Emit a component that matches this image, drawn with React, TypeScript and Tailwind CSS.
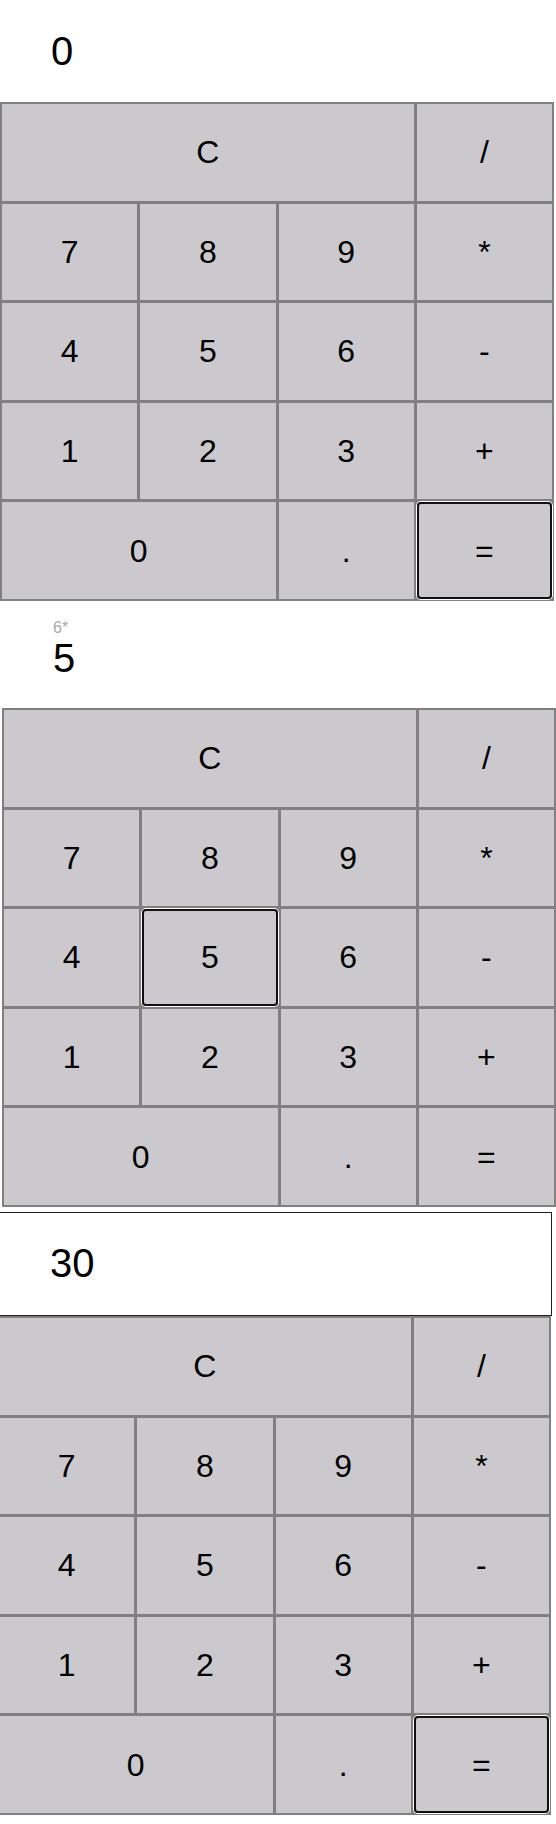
import React from "react";

type Key = { label: string; span?: string };

// Same keypad in every snapshot, read row by row.
const keys: Key[] = [
  { label: "C", span: "col-span-3" },
  { label: "/" },
  { label: "7" },
  { label: "8" },
  { label: "9" },
  { label: "*" },
  { label: "4" },
  { label: "5" },
  { label: "6" },
  { label: "-" },
  { label: "1" },
  { label: "2" },
  { label: "3" },
  { label: "+" },
  { label: "0", span: "col-span-2" },
  { label: "." },
  { label: "=" },
];

const Keypad = ({ focused }: { focused?: string }) => (
  <div className="grid w-[554px] grid-cols-4 gap-[3px] bg-[#808080] p-[2px]">
    {keys.map((k) => (
      <button
        key={k.label}
        type="button"
        className={`flex h-[96.6px] items-center justify-center bg-[#cbc9ce] text-[32px] leading-none text-black ${
          k.span ?? ""
        } ${
          focused === k.label
            ? "rounded-[4px] shadow-[0_0_0_1px_#ffffff,inset_0_0_0_2px_#101010]"
            : ""
        }`}
      >
        {k.label}
      </button>
    ))}
  </div>
);

const App = () => {
  return (
    <div className="min-h-[1824px] w-[556px] overflow-hidden bg-white font-['Liberation_Sans',Arial,sans-serif] text-black">
      {/* Snapshot 1: fresh */}
      <div className="w-[554px]">
        <div className="h-[102px] pl-[51px] pt-[28px] text-[40px] leading-[46px]">
          0
        </div>
        <Keypad focused="=" />
      </div>

      {/* Snapshot 2: mid-entry */}
      <div className="ml-[2px] w-[554px]">
        <div className="h-[107px] pl-[51px] pt-[19px]">
          <div className="text-[16px] leading-[15px] text-[#a9a9a9]">6*</div>
          <div className="text-[40px] leading-[46px]">5</div>
        </div>
        <Keypad focused="5" />
      </div>

      {/* Snapshot 3: result */}
      <div className="-ml-[3px] mt-[5px] w-[556px]">
        <div className="h-[104px] w-[555px] border border-[#1f1f1f] pl-[52px] pt-[27px] text-[40px] leading-[46px]">
          30
        </div>
        <Keypad focused="=" />
      </div>
    </div>
  );
};

export default App;
